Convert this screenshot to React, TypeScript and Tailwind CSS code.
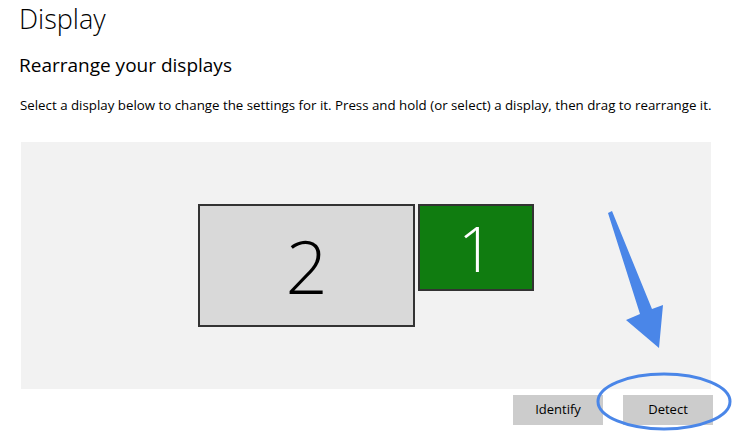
import React from 'react';

const font = { fontFamily: '"Open Sans", "Noto Sans", sans-serif' };

export default function App() {
  return (
    <div
      className="relative w-[732px] h-[436px] overflow-hidden bg-white text-black"
      style={font}
    >
      <div className="pl-[19px] pt-[1px]">
        <h1 className="text-[27px] font-light leading-[36px]">Display</h1>
        <h2 className="mt-[15px] text-[19px] font-normal leading-[26px]">Rearrange your displays</h2>
        <p className="mt-[18px] pl-[1px] text-[13.3px] leading-[18px] whitespace-nowrap">
          Select a display below to change the settings for it. Press and hold (or select) a display, then drag to rearrange it.
        </p>
      </div>

      {/* monitor arrangement */}
      <div className="ml-[21px] mt-[28px] w-[690px] h-[247px] bg-[#f2f2f2] flex items-center justify-center">
        <div className="flex items-start gap-[3px]">
          <div className="w-[217px] h-[123px] border-2 border-[#333333] bg-[#d9d9d9] flex items-center justify-center">
            <span className="text-[74px] font-light leading-none text-black">2</span>
          </div>
          <div className="w-[116px] h-[87px] border-2 border-[#333333] bg-[#107c10] flex items-center justify-center">
            <span className="text-[62px] font-light leading-none text-white">1</span>
          </div>
        </div>
      </div>

      <div className="mt-[6px] w-[713px] flex justify-end gap-[20px]">
        <button className="w-[90px] h-[30px] bg-[#cccccc] text-[13px] text-black">Identify</button>
        <button className="w-[90px] h-[30px] bg-[#cccccc] text-[13px] text-black">Detect</button>
      </div>

      {/* annotation overlay */}
      <svg className="absolute left-0 top-0 pointer-events-none" width="732" height="436" viewBox="0 0 732 436">
        <polygon
          points="608,213 612,211 652,309 663,305 659,348 626,320 640,314"
          fill="#4a86e8"
        />
        <ellipse cx="664" cy="401.5" rx="66" ry="27.5" fill="none" stroke="#4a86e8" strokeWidth="3" />
      </svg>
    </div>
  );
}
